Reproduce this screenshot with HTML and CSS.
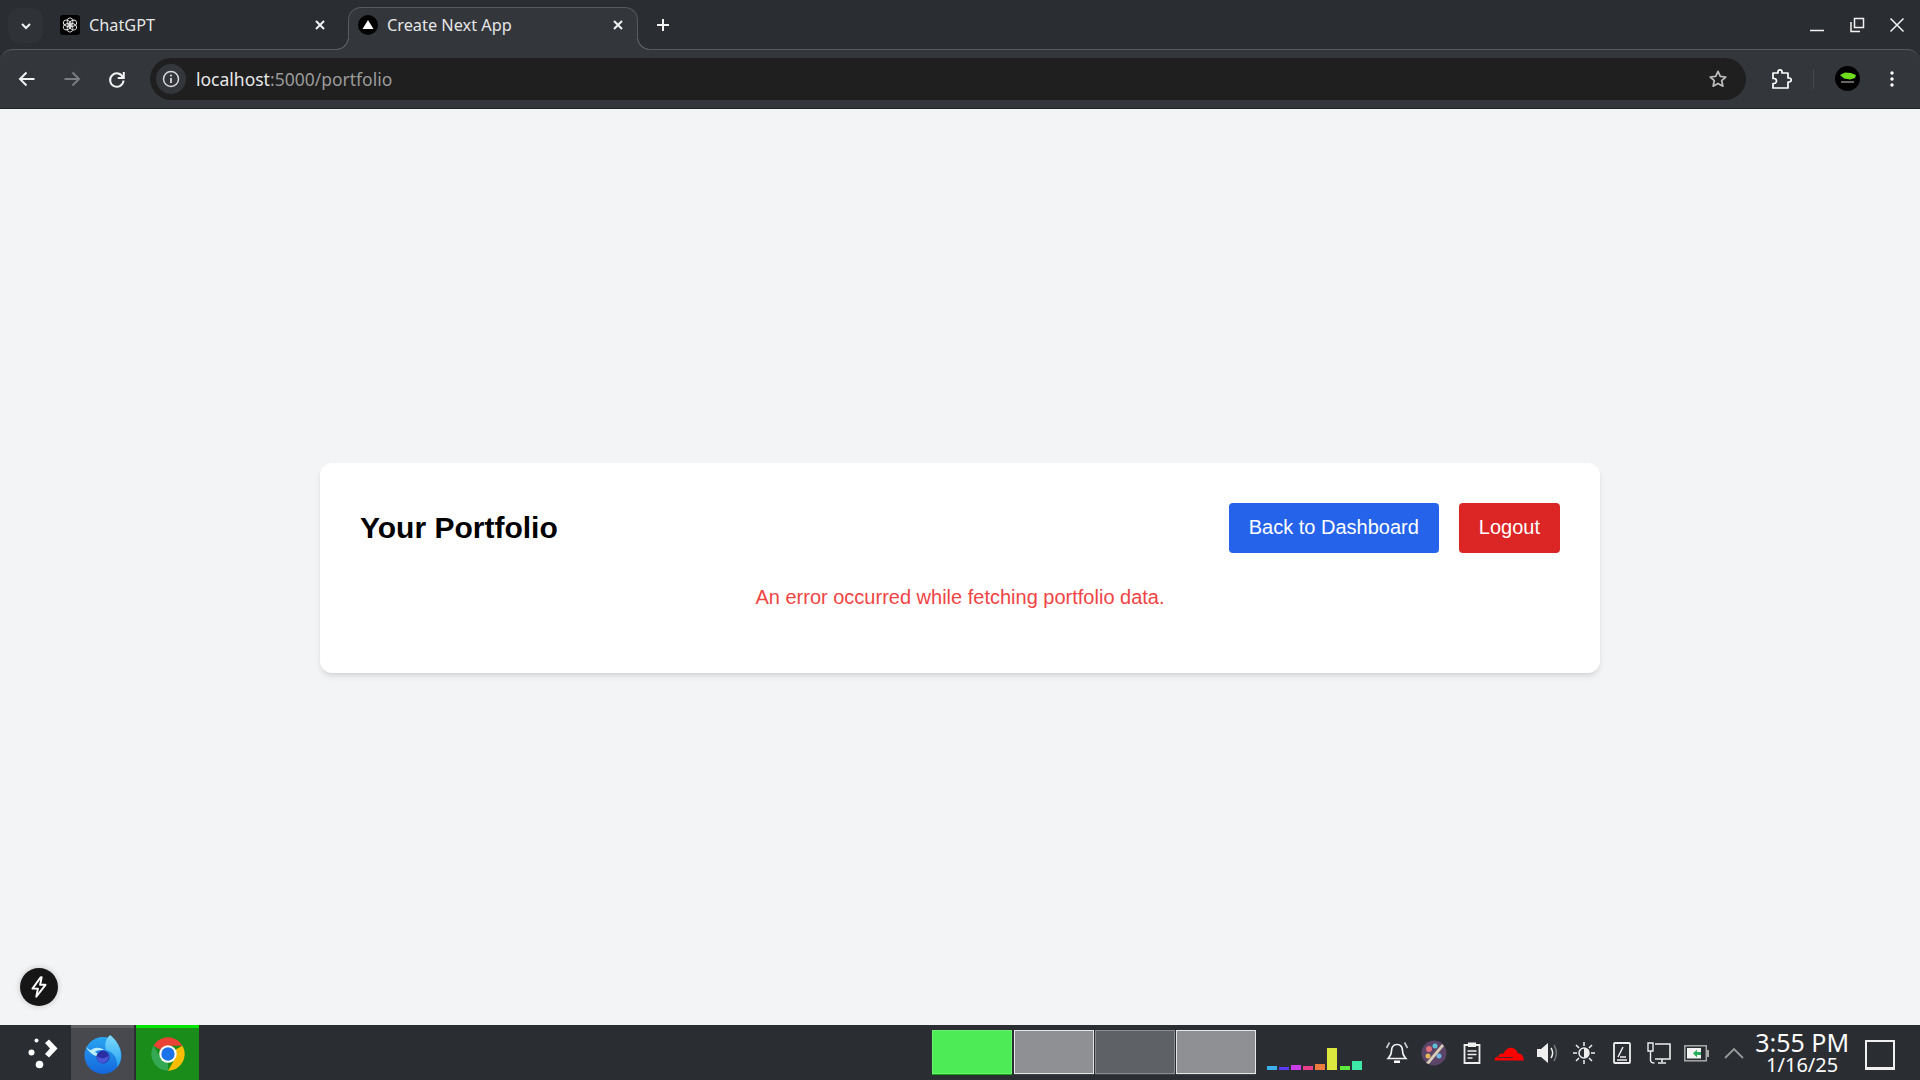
FILE: index.html
```html
<!DOCTYPE html>
<html lang="en">
<head>
<meta charset="utf-8">
<title>Create Next App</title>
<link rel="stylesheet" href="styles.css">
</head>
<body>
<header class="tabstrip">
  <button class="tab-search"><svg class="ic12" viewBox="0 0 12 12"><path d="M2 4l4 4 4-4" class="st-w2"/></svg></button>
  <div class="tab">
    <svg class="fav" viewBox="0 0 20 20"><rect width="20" height="20" rx="3" fill="#000"/><g fill="none" stroke="#e0e0e0" stroke-width="0.900"><ellipse cx="10" cy="6.800" rx="2.900" ry="4"/><ellipse cx="10" cy="6.800" rx="2.900" ry="4" transform="rotate(60 10 10)"/><ellipse cx="10" cy="6.800" rx="2.900" ry="4" transform="rotate(120 10 10)"/><ellipse cx="10" cy="6.800" rx="2.900" ry="4" transform="rotate(180 10 10)"/><ellipse cx="10" cy="6.800" rx="2.900" ry="4" transform="rotate(240 10 10)"/><ellipse cx="10" cy="6.800" rx="2.900" ry="4" transform="rotate(300 10 10)"/></g></svg>
    <span class="tab-title">ChatGPT</span>
    <svg class="tab-close" viewBox="0 0 16 16"><path d="M4 4l8 8M12 4l-8 8" class="st-w2"/></svg>
  </div>
  <div class="tab tab-active">
    <svg class="fav" viewBox="0 0 20 20"><circle cx="10" cy="10" r="10" fill="#000"/><path d="M10 5l5.500 9h-11z" fill="#fff"/></svg>
    <span class="tab-title">Create Next App</span>
    <svg class="tab-close" viewBox="0 0 16 16"><path d="M4 4l8 8M12 4l-8 8" class="st-w2"/></svg>
  </div>
  <svg class="new-tab" viewBox="0 0 16 16"><path d="M8 2v12M2 8h12" class="st-w2"/></svg>
  <div class="win-controls">
    <svg class="win-btn" viewBox="0 0 16 16"><path d="M1 13.500h14" class="st-w15"/></svg>
    <svg class="win-btn" viewBox="0 0 16 16"><path d="M5.500 1.500h9v9h-9zM2 5v9.500h9" class="st-w15"/></svg>
    <svg class="win-btn" viewBox="0 0 16 16"><path d="M1.500 1.500l13 13M14.500 1.500l-13 13" class="st-w15"/></svg>
  </div>
</header>

<nav class="toolbar">
  <button class="tb-btn"><svg class="ic20" viewBox="0 0 20 20"><path d="M17.500 10H3.500M9.500 3.500L3 10l6.500 6.500" class="st-w2"/></svg></button>
  <button class="tb-btn"><svg class="ic20" viewBox="0 0 20 20"><path d="M2.500 10h14M10.500 3.500L17 10l-6.500 6.500" class="st-dim"/></svg></button>
  <button class="tb-btn"><svg class="ic20" viewBox="0 0 20 20"><path d="M16 8.500A6.700 6.700 0 1 0 16.500 11.500" class="st-w2"/><path d="M16.800 3v6h-6" class="st-w2"/></svg></button>
  <div class="omnibox">
    <span class="site-info"><svg class="ic20" viewBox="0 0 20 20"><circle cx="10" cy="10" r="7.500" fill="none" stroke="#d8d8d8" stroke-width="1.500"/><path d="M10 9v5" stroke="#d8d8d8" stroke-width="1.800"/><circle cx="10" cy="6.500" r="1.100" fill="#d8d8d8"/></svg></span>
    <span class="url"><span class="url-host">localhost</span>:5000/portfolio</span>
    <svg class="star" viewBox="0 0 20 20"><path d="M10 2.300l2.300 5.100 5.500.6-4.100 3.700 1.200 5.500-4.900-2.800-4.900 2.800 1.200-5.500L2.200 8l5.500-.6z" fill="none" stroke="#bdbdbd" stroke-width="1.700" stroke-linejoin="round"/></svg>
  </div>
  <button class="tb-btn tb-ext"><svg class="ic22" viewBox="0 0 22 22"><path d="M3 5h5V3.800a2 2 0 0 1 4 0V5h6v5h1.200a2 2 0 0 1 0 4H18v6H3v-4.500h1a2.500 2.500 0 0 0 0-5H3z" fill="none" stroke="#fff" stroke-width="1.700" stroke-linejoin="round"/></svg></button>
  <span class="tb-sep"></span>
  <svg class="avatar" viewBox="0 0 25 25"><circle cx="12.500" cy="12.500" r="12.500" fill="#000"/><path d="M5 9l5-2.500 6 .5 5 2-1 3-5 1.500-6-1z" fill="#6fdc1f"/><path d="M6 16h13" stroke="#ccc" stroke-width="1"/></svg>
  <button class="tb-btn"><svg class="ic20" viewBox="0 0 20 20"><circle cx="10" cy="4" r="1.700" fill="#fff"/><circle cx="10" cy="10" r="1.700" fill="#fff"/><circle cx="10" cy="16" r="1.700" fill="#fff"/></svg></button>
</nav>

<main class="page">
  <section class="card">
    <div class="card-head">
      <h1 class="card-title">Your Portfolio</h1>
      <div class="actions">
        <button class="btn btn-blue">Back to Dashboard</button>
        <button class="btn btn-red">Logout</button>
      </div>
    </div>
    <p class="error">An error occurred while fetching portfolio data.</p>
  </section>
  <div class="next-badge"><svg class="ic26" viewBox="0 0 24 24"><path d="M13.500 3L6 13.500h5L9.500 21 18 10h-5l1.500-7z" fill="none" stroke="#fff" stroke-width="1.800" stroke-linejoin="round"/></svg></div>
</main>

<footer class="taskbar">
  <div class="launcher"><svg class="launcher-ic" viewBox="0 0 34 34"><path d="M23 3.500l8.500 9-8.500 9-4-3.500 5-5.500-5-5.500z" fill="#fff"/><circle cx="10.500" cy="4.500" r="2" fill="#fff"/><circle cx="5.500" cy="16.500" r="3" fill="#fff"/><circle cx="13.500" cy="28.500" r="3.800" fill="#fff"/></svg></div>
  <div class="task task-ff">
    <svg class="task-ic" viewBox="0 0 40 40">
      <defs>
        <linearGradient id="ffa" x1="0" y1="0" x2="0" y2="1"><stop offset="0" stop-color="#29a5f2"/><stop offset="1" stop-color="#1466dc"/></linearGradient>
        <linearGradient id="ffb" x1="0" y1="0" x2="0" y2="1"><stop offset="0" stop-color="#7fdcfd"/><stop offset="1" stop-color="#22a0f0"/></linearGradient>
      </defs>
      <circle cx="20" cy="21.500" r="18.500" fill="url(#ffa)"/>
      <path d="M27 1c4 3 11 10 11 21 0 5-2 9-4 11 1-8-3-15-11-17-2-6 0-11 4-15z" fill="url(#ffb)"/>
      <path d="M3 12c1 2 3 4 5 4 4-3 9-3 13 0-3 0-7 0-9 2 3 2 5 3 9 2-2 3-8 3-12 0-2-2-5-4-6-8z" fill="#bdeeff"/>
      <circle cx="20" cy="23" r="6.500" fill="#2a2ea0"/>
      <path d="M14 22c3 3 9 3 12-1 0 5-3 8-7 8-3 0-5-3-5-7z" fill="#4a55d8"/>
    </svg>
  </div>
  <div class="task task-chrome">
    <svg class="task-ic" viewBox="0 0 48 48">
      <path d="M6.680 14A20 20 0 0 1 41.320 14H24A10 10 0 0 0 15.340 19z" fill="#ea4335"/>
      <path d="M6.680 14A20 20 0 0 1 41.320 14H24A10 10 0 0 0 15.340 19z" fill="#fbbc04" transform="rotate(120 24 24)"/>
      <path d="M6.680 14A20 20 0 0 1 41.320 14H24A10 10 0 0 0 15.340 19z" fill="#34a853" transform="rotate(240 24 24)"/>
      <circle cx="24" cy="24" r="10.500" fill="#fff"/>
      <circle cx="24" cy="24" r="8" fill="#1a73e8"/>
    </svg>
  </div>
  <div class="pager">
    <div class="desk desk-green"></div>
    <div class="desk desk-gray"></div>
    <div class="desk desk-dark"></div>
    <div class="desk desk-gray"></div>
  </div>
  <div class="bars">
    <i class="bar" style="height:4px;background:#3daee9"></i>
    <i class="bar" style="height:3px;background:#5a3cf0"></i>
    <i class="bar" style="height:5px;background:#cc3ee8"></i>
    <i class="bar" style="height:4px;background:#e83e8c"></i>
    <i class="bar" style="height:6px;background:#ec7b3f"></i>
    <i class="bar" style="height:22px;background:#dce83e"></i>
    <i class="bar" style="height:4px;background:#5fe83e"></i>
    <i class="bar" style="height:9px;background:#3ee8a8"></i>
  </div>
  <div class="tray">
    <svg class="tray-ic" viewBox="0 0 26 26"><path d="M13 4.500c-4 0-5.500 3-5.500 6.500 0 4-2 5.500-3.500 7.500h18c-1.500-2-3.500-3.500-3.500-7.500 0-3.500-1.500-6.500-5.500-6.500z" fill="none" stroke="#f2f2f2" stroke-width="1.700"/><path d="M10 20.500h6V23h-6z" fill="#fff"/><path d="M5.500 2.500L2.500 8M20.500 2.500l3 5.500" stroke="#ccc" stroke-width="1.600"/></svg>
    <svg class="tray-ic" viewBox="0 0 26 26"><circle cx="13" cy="13" r="12.500" fill="#5a4468"/><circle cx="8" cy="9" r="3" fill="#e0707a"/><circle cx="14" cy="6" r="2.500" fill="#5cc1d6"/><circle cx="7" cy="16" r="2.500" fill="#e6b85c"/><circle cx="18" cy="16" r="2.500" fill="#6fb8e6"/><path d="M5 23L21 4l2 2L8 24z" fill="#d8cdb8"/></svg>
    <svg class="tray-ic" viewBox="0 0 26 26"><path d="M5.500 5h15v18h-15z" fill="none" stroke="#eee" stroke-width="1.800"/><rect x="9" y="2.500" width="8" height="4.500" fill="#eee"/><path d="M8.500 11h9M8.500 14.500h9M8.500 18h5" stroke="#eee" stroke-width="1.500"/></svg>
    <svg class="tray-ic" viewBox="0 0 30 26"><path d="M0.500 20.500c0-2.500 2-4 4-4 .5-2.500 3-3.500 5-2.500 1.500-4.500 5.500-7 9-6 2.800.8 4.500 2.800 5.300 5.500 3-.5 6 1.800 6 7z" fill="#f00"/><path d="M4 17.500h15" stroke="#2a2d32" stroke-width="0.800"/></svg>
    <svg class="tray-ic" viewBox="0 0 26 26"><path d="M3 9h4l7-6v20l-7-6H3z" fill="#eee"/><path d="M17 8c2 3 2 7 0 10" fill="none" stroke="#eee" stroke-width="1.500"/><path d="M20 5c3 5 3 11 0 16" fill="none" stroke="#777" stroke-width="1.500"/></svg>
    <svg class="tray-ic" viewBox="0 0 26 26"><circle cx="13" cy="13" r="5" fill="none" stroke="#eee" stroke-width="1.500"/><path d="M13 8a5 5 0 0 1 0 10z" fill="#eee"/><path d="M13 2v4M13 20v4M2 13h4M20 13h4M5 5l3 3M18 18l3 3M21 5l-3 3M8 18l-3 3" stroke="#eee" stroke-width="1.500"/></svg>
    <svg class="tray-ic" viewBox="0 0 26 26"><path d="M6 3h14a1 1 0 0 1 1 1v18a1 1 0 0 1-1 1H6a1 1 0 0 1-1-1V4a1 1 0 0 1 1-1z" fill="none" stroke="#eee" stroke-width="1.800"/><path d="M9 17l5-10M11 17h6M8 20h10" stroke="#eee" stroke-width="1.500"/></svg>
    <svg class="tray-ic" viewBox="0 0 26 26"><path d="M9 4h15v15H9M16 19v3M12 23h8" fill="none" stroke="#eee" stroke-width="1.600"/><path d="M2 3h5v8H2z" fill="none" stroke="#eee" stroke-width="1.400"/><path d="M4.500 11v9c0 2 1.500 3 4 3" fill="none" stroke="#eee" stroke-width="1.400"/></svg>
    <svg class="tray-ic" viewBox="0 0 26 26"><rect x="0.800" y="5.800" width="21.500" height="15" fill="#2a2d32" stroke="#aaa" stroke-width="1.500"/><rect x="3" y="8" width="14" height="10.500" fill="#f4f4f4"/><rect x="23" y="10" width="2" height="7" fill="#aaa"/><path d="M9 13.200l4-3.500V12h4v3h-4v2.500z" fill="#27ae60"/></svg>
    <svg class="tray-ic" viewBox="0 0 26 26"><path d="M4 18l9-9 9 9" fill="none" stroke="#999" stroke-width="1.800"/></svg>
  </div>
  <div class="clock"><span class="clock-time">3:55 PM</span><span class="clock-date">1/16/25</span></div>
  <div class="show-desktop"></div>
</footer>
</body>
</html>
```
FILE: styles.css
```css
* { box-sizing: border-box; }
html, body { height: 100%; }
body {
  margin: 0;
  display: flex;
  flex-direction: column;
  height: 100vh;
  overflow: hidden;
  font-family: "Noto Sans", sans-serif;
  background: #2a2d32;
}
button { border: 0; padding: 0; background: none; font: inherit; }

.st-w2 { fill: none; stroke: #f2f2f2; stroke-width: 2; }
.st-w15 { fill: none; stroke: #f2f2f2; stroke-width: 1.500; }
.st-dim { fill: none; stroke: #7b7d80; stroke-width: 2; }
.ic12 { width: 12px; height: 12px; }
.ic20 { width: 20px; height: 20px; display: block; }
.ic22 { width: 22px; height: 22px; display: block; }
.ic26 { width: 26px; height: 26px; display: block; }

/* Tab strip */
.tabstrip {
  height: 49px;
  flex: none;
  display: flex;
  align-items: flex-start;
  padding-left: 8px;
  background: #2a2d32;
}
.tab-search {
  width: 35px;
  height: 35px;
  margin: 8px 7px 0 0;
  border-radius: 12px;
  background: #2f3236;
  display: flex;
  align-items: center;
  justify-content: center;
}
.tab {
  width: 290px;
  height: 43px;
  margin: 7px 8px 0 0;
  padding: 0 11px 9px 9px;
  display: flex;
  align-items: center;
  gap: 9px;
  color: #e6e6e6;
  font-size: 16.300px;
  position: relative;
  border: 1px solid transparent;
  border-bottom: 0;
}
.tab-active {
  z-index: 2;
  background: #33373c;
  border-color: #56595d;
  border-radius: 13px 13px 0 0;
}
.tab-active::before,
.tab-active::after {
  content: "";
  position: absolute;
  bottom: 0;
  width: 13px;
  height: 13px;
}
.tab-active::before {
  left: -13px;
  background: radial-gradient(circle at 0 0, #2a2d32 11.500px, #56595d 12px, #56595d 12.800px, #33373c 13.300px);
}
.tab-active::after {
  right: -13px;
  background: radial-gradient(circle at 100% 0, #2a2d32 11.500px, #56595d 12px, #56595d 12.800px, #33373c 13.300px);
}
.fav { width: 20px; height: 20px; flex: none; }
.tab-title { flex: 1; white-space: nowrap; }
.tab-close { width: 16px; height: 16px; flex: none; }
.new-tab { width: 16px; height: 16px; margin: 17px 0 0 9px; flex: none; }
.win-controls {
  margin-left: auto;
  display: flex;
  gap: 24px;
  padding: 17px 15px 0 0;
}
.win-btn { width: 16px; height: 16px; display: block; }

/* Toolbar */
.toolbar {
  height: 60px;
  flex: none;
  display: flex;
  align-items: center;
  padding: 0 10px 1px 9px;
  background: #33373c;
  border-top: 1px solid #56595d;
  border-bottom: 1px solid #1f2124;
  border-radius: 13px 13px 0 0;
}
.tb-btn {
  width: 36px;
  height: 36px;
  flex: none;
  display: flex;
  align-items: center;
  justify-content: center;
}
.tb-btn + .tb-btn { margin-left: 9px; }
.omnibox {
  flex: 1;
  height: 42px;
  margin: 0 17px 0 15px;
  padding: 0 18px 0 6px;
  border-radius: 21px;
  background: #1f1f1f;
  display: flex;
  align-items: center;
  color: #9a9a9a;
  font-size: 17.500px;
}
.site-info {
  width: 30px;
  height: 30px;
  border-radius: 50%;
  background: #33373c;
  display: flex;
  align-items: center;
  justify-content: center;
  flex: none;
}
.url { flex: 1; margin-left: 10px; white-space: nowrap; }
.url-host { color: #e8e8e8; }
.star { width: 20px; height: 20px; flex: none; }
.tb-ext { margin: 0; }
.tb-sep { width: 1px; height: 20px; margin: 0 21px 0 14px; background: #45484c; flex: none; }
.avatar { width: 25px; height: 25px; margin-right: 14px; flex: none; }

/* Page */
.page {
  flex: 1;
  display: flex;
  align-items: center;
  justify-content: center;
  padding-top: 2px;
  position: relative;
  background: #f3f4f6;
  font-family: "Liberation Sans", Arial, sans-serif;
}
.card {
  width: 1280px;
  height: 210px;
  padding: 40px;
  background: #fff;
  border-radius: 12px;
  box-shadow: 0 4px 6px -1px rgba(0,0,0,.1), 0 2px 4px -2px rgba(0,0,0,.1);
}
.card-head {
  display: flex;
  align-items: center;
  justify-content: space-between;
  margin-bottom: 30px;
}
.card-title { margin: 0; padding-bottom: 1px; font-size: 30px; font-weight: 700; color: #000; }
.actions { display: flex; gap: 20px; }
.btn {
  height: 50px;
  padding: 0 20px 1px;
  border-radius: 4px;
  color: #fff;
  font-size: 20px;
}
.btn-blue { background: #2563eb; }
.btn-red { background: #dc2626; }
.error { margin: 0; text-align: center; color: #ef4444; font-size: 20px; line-height: 28px; }
.next-badge {
  position: absolute;
  left: 20px;
  bottom: 19px;
  width: 38px;
  height: 38px;
  border-radius: 50%;
  background: #161616;
  box-shadow: 0 0 6px rgba(0,0,0,.2);
  display: flex;
  align-items: center;
  justify-content: center;
}

/* Taskbar */
.taskbar {
  height: 55px;
  flex: none;
  display: flex;
  background: #2a2d32;
  color: #fcfcfc;
}
.launcher {
  width: 71px;
  flex: none;
  display: flex;
  align-items: center;
  justify-content: center;
  padding-left: 14px;
}
.launcher-ic { width: 34px; height: 34px; display: block; }
.task {
  width: 63px;
  flex: none;
  display: flex;
  align-items: center;
  justify-content: center;
  border-top: 3px solid;
}
.task-ff { background: #47494e; border-color: #5f6165; margin-right: 2px; }
.task-chrome { background: #1a8c1a; border-color: #00e600; }
.task-ic { width: 40px; height: 40px; display: block; }
.pager {
  margin-left: 733px;
  display: flex;
  gap: 1px;
  padding-top: 5px;
  height: 50px;
  flex: none;
}
.desk {
  width: 80px;
  height: 45px;
  border-bottom: 3px solid #3e4145;
  position: relative;
}
.desk::before {
  content: "";
  display: block;
  height: 42px;
  border: 1.500px solid #e6e6e6;
  background: #8f9093;
}
.desk-green { margin-right: 1px; border-bottom-color: #13a813; }
.desk-green::before { background: #4deb55; border-color: #6cf070; }
.desk-dark::before { background: #5e6165; border-color: #8a8c8f; }
.bars {
  margin-left: 11px;
  height: 45px;
  display: flex;
  align-items: flex-end;
  gap: 2.100px;
  flex: none;
}
.bar { width: 10px; display: block; }
.tray {
  margin-left: 22px;
  display: flex;
  align-items: center;
  gap: 11.500px;
  flex: none;
}
.tray-ic { width: 26px; height: 26px; display: block; flex: none; }
.tray-ic:nth-child(4) { width: 30px; margin: 0 -2px; }
.clock {
  width: 100px;
  margin-left: 5px;
  display: flex;
  flex-direction: column;
  align-items: center;
  flex: none;
}
.clock-time { font-size: 25px; line-height: 27px; margin-top: 4px; white-space: nowrap; }
.clock-date { font-size: 20px; line-height: 18px; white-space: nowrap; }
.show-desktop {
  width: 30px;
  height: 30px;
  margin: 15px 0 0 13px;
  border: 2px solid #f0f0f0;
  border-bottom-width: 3px;
  flex: none;
}
```
